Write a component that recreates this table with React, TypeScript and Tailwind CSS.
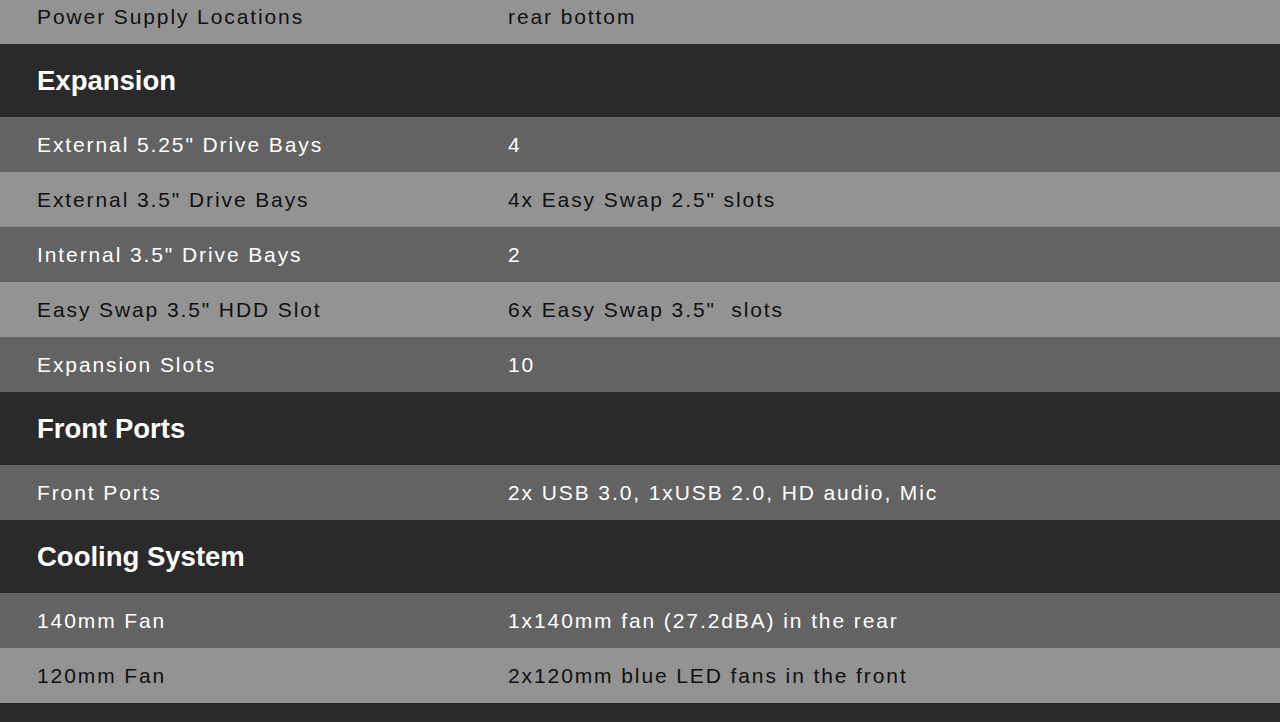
import React from "react";

type Row = { label: string; value: string };
type Section = { title?: string; rows: Row[] };

const sections: Section[] = [
  { rows: [{ label: "Power Supply Locations", value: "rear bottom" }] },
  {
    title: "Expansion",
    rows: [
      { label: "External 5.25\" Drive Bays", value: "4" },
      { label: "External 3.5\" Drive Bays", value: "4x Easy Swap 2.5\" slots" },
      { label: "Internal 3.5\" Drive Bays", value: "2" },
      { label: "Easy Swap 3.5\" HDD Slot", value: "6x Easy Swap 3.5\"\u00a0 slots" },
      { label: "Expansion Slots", value: "10" },
    ],
  },
  {
    title: "Front Ports",
    rows: [{ label: "Front Ports", value: "2x USB 3.0, 1xUSB 2.0, HD audio, Mic" }],
  },
  {
    title: "Cooling System",
    rows: [
      { label: "140mm Fan", value: "1x140mm fan (27.2dBA) in the rear" },
      { label: "120mm Fan", value: "2x120mm blue LED fans in the front" },
    ],
  },
];

const SpecRow: React.FC<{ row: Row; light: boolean }> = ({ row, light }) => (
  <div
    className={
      "flex items-center h-[55px] pl-[37px] text-[21px] tracking-[1.9px] " +
      (light ? "bg-[#939393] text-[#111111]" : "bg-[#636363] text-white")
    }
  >
    <div className="w-[471px] shrink-0">{row.label}</div>
    <div>{row.value}</div>
  </div>
);

const App: React.FC = () => {
  return (
    <div className="w-[1280px] h-[722px] overflow-hidden bg-[#2a2a2a] font-['Liberation_Sans',Arial,sans-serif]">
      <div className="-mt-[11px]">
        {sections.map((section, i) => (
          <div key={i}>
            {section.title && (
              <div className="flex items-center h-[73px] pl-[37px] bg-[#2a2a2a] text-white text-[27.5px] font-bold">
                {section.title}
              </div>
            )}
            {section.rows.map((row, j) => (
              <SpecRow key={j} row={row} light={section.title ? j % 2 === 1 : true} />
            ))}
          </div>
        ))}
      </div>
    </div>
  );
};

export default App;
